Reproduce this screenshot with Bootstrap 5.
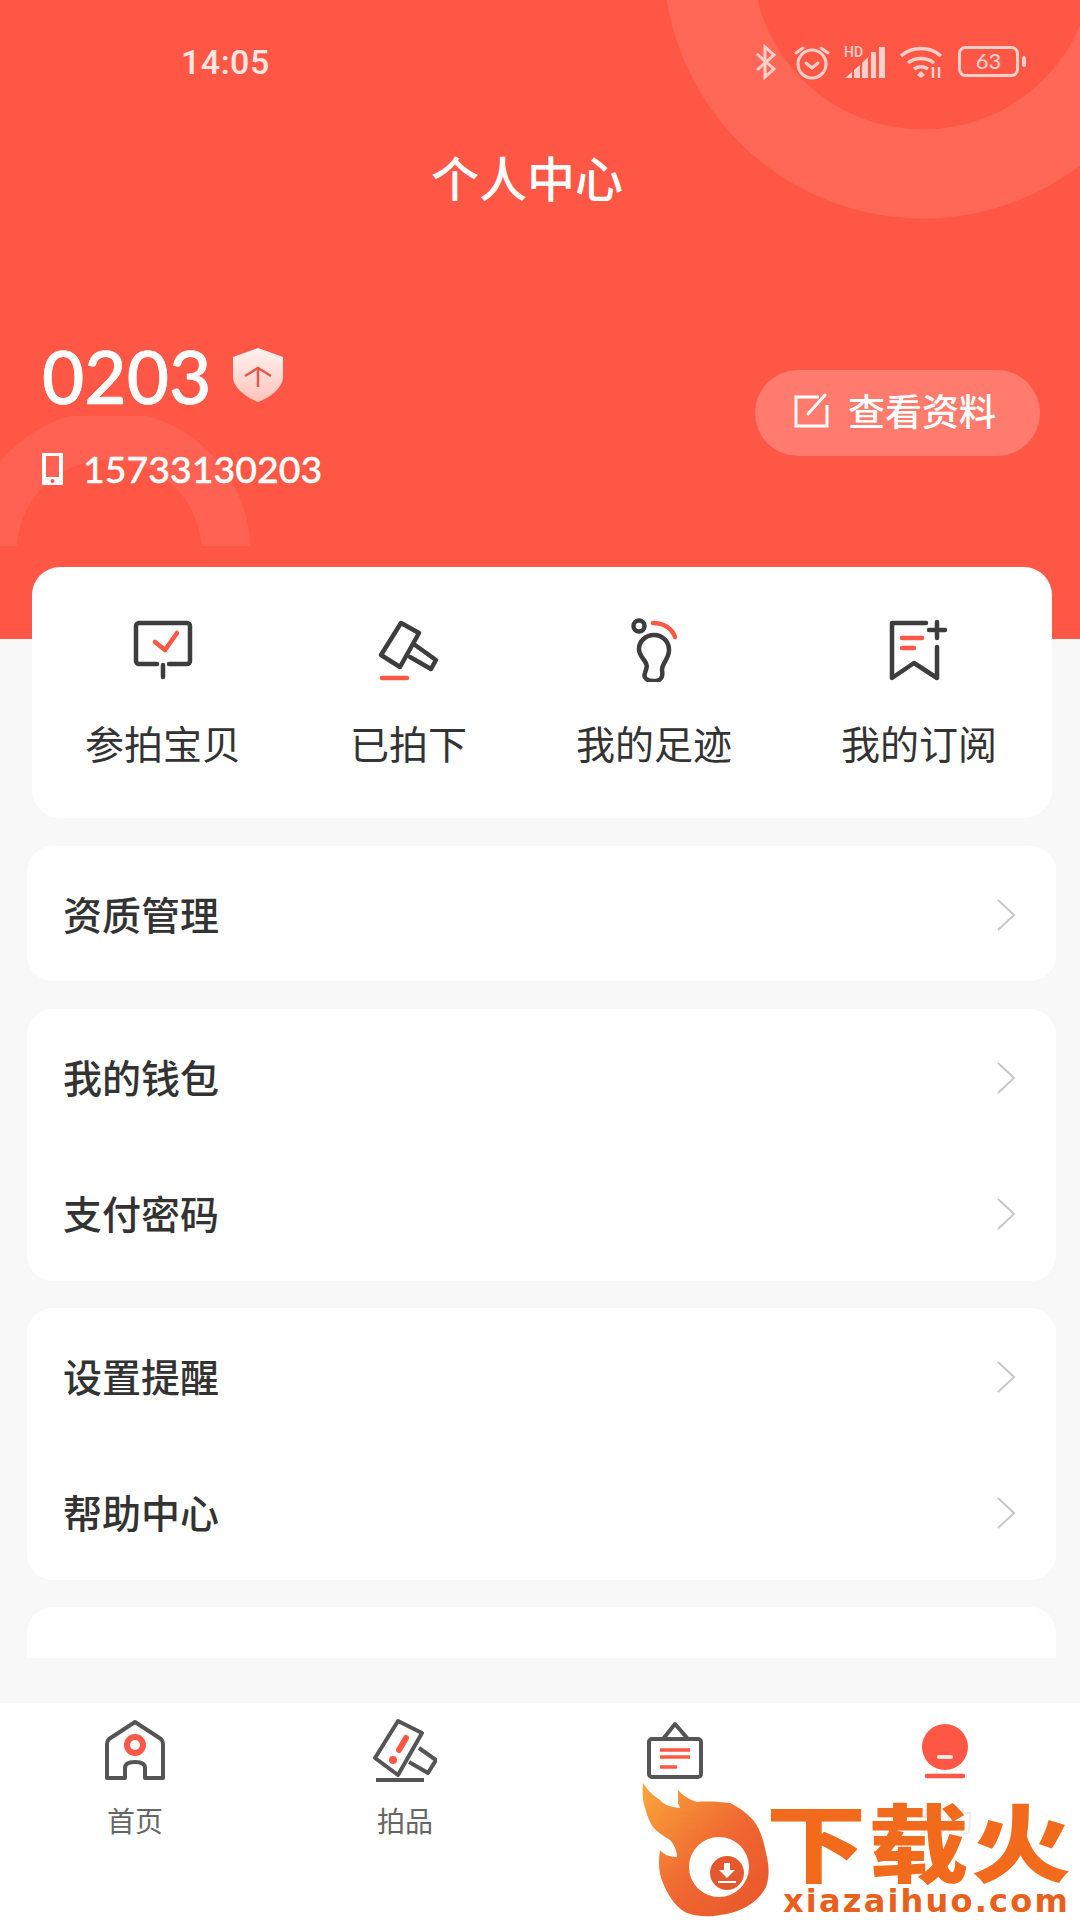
<!DOCTYPE html>
<html lang="zh-CN">
<head>
<meta charset="utf-8">
<title>个人中心</title>
<link href="https://cdn.jsdelivr.net/npm/bootstrap@5.3.0/dist/css/bootstrap.min.css" rel="stylesheet">
<style>
html,body{margin:0;width:1080px;height:1920px;overflow:hidden}
body{background:#f8f8f8;font-family:"Noto Sans CJK SC","Noto Sans",sans-serif;color:#333}
.app-page{position:relative;width:1080px;height:1920px;overflow:hidden}
.hero{position:relative;height:639px;background:#ff5745;color:#fff;overflow:hidden}
.hero-decor{position:absolute;left:0;top:0;width:1080px;height:639px}
.hero-body{position:relative}
.status-row{padding:41px 52px 0 181px;height:82px}
.status-time{font:500 34px/42px Roboto,sans-serif;color:#ffe6e3;letter-spacing:.5px}
.status-icons{gap:13px;margin-top:3px}
.status-icons svg:first-child{margin-right:2px;margin-left:-2px}
.page-title{margin:64px 0 0;font-size:48px;font-weight:500;line-height:60px;text-align:center;padding-right:26px}
.profile-row{margin-top:131px;padding:0 40px 0 42px}
.user-name{font:500 73px/80px Lato,sans-serif;margin:-1px 0 1px;-webkit-text-stroke:.7px #fff}
.name-row{gap:22px}
.name-row svg{margin-top:-5px}
.user-phone{font:500 37.500px/40px Lato,sans-serif;margin:32px 0 0;gap:20px;-webkit-text-stroke:.35px #fff}
.user-phone svg{flex:none}
.view-btn{width:285px;height:86px;border-radius:43px;background:#ff7b6e;color:#fff;border:0;font-size:37px;font-weight:500;line-height:1;gap:16px;padding:0}
.view-btn:hover,.view-btn:focus{background:#ff7b6e;color:#fff}
.view-btn span{margin-top:-6px}
.view-btn svg{margin-top:-6px;margin-left:-5px}
.content-area{height:1064px;padding:0 24px 0 27px}
.quick-card{margin:-72px 4px 28px 5px;height:251px;border:0;border-radius:28px;background:#fff;padding:0 55px 0 53px;position:relative}
.quick-item{font-size:39px;line-height:50px;color:#333;padding-top:51px;width:117px;white-space:nowrap;align-items:center}
.quick-item.wide{width:156px}
.quick-item svg{margin-bottom:35px}
.menu-group{border-radius:26px;margin-bottom:27px;background:#fff}
.menu-group.single{margin-bottom:28px}
.menu-group .list-group-item{height:136px;border:0;padding:0 40px 0 36px;font-size:39px;font-weight:500;color:#333;background:transparent;line-height:1}
.menu-group .list-group-item span{margin-top:-1px}
.menu-group .list-group-item svg{margin-top:2px}
.menu-group.single .list-group-item{height:135px}
.menu-group.clipped{height:51px;border-radius:26px 26px 0 0;margin-bottom:0}
.tab-bar{height:217px;background:#fff}
.tab-item{width:270px;font-size:28px;line-height:36px;color:#666;padding-top:15px}
.tab-item svg{margin-bottom:20px}
.brand-mark{position:absolute;left:640px;top:1783px;width:440px;height:134px;background:linear-gradient(rgba(255,255,255,0) 0,rgba(255,255,255,.88) 16px)}
.brand-flame{position:absolute;left:0;top:0;opacity:.93}
.brand-name{position:absolute;left:126px;top:14px;font:900 100px/100px "Noto Sans CJK SC",sans-serif;color:#f26a1b;letter-spacing:2.500px;white-space:nowrap;transform:scaleY(.85);transform-origin:0 0}
.brand-url{position:absolute;left:143px;top:101px;font:700 32px/34px "DejaVu Sans",sans-serif;color:#e8601c;letter-spacing:2.200px;white-space:nowrap}
</style>
</head>
<body>
<div class="app-page d-flex flex-column">
  <header class="hero">
    <svg class="hero-decor" viewBox="0 0 1080 639" fill="none" aria-hidden="true">
      <circle cx="923" cy="-41" r="215" stroke="#ff6757" stroke-width="89"/>
      <clipPath id="leftClip"><rect x="0" y="416" width="300" height="130"/></clipPath>
      <circle cx="109" cy="552" r="117" stroke="#ff6252" stroke-width="49" clip-path="url(#leftClip)"/>
    </svg>
    <div class="hero-body">
      <div class="status-row d-flex justify-content-between align-items-start">
        <span class="status-time">14:05</span>
        <div class="status-icons d-flex align-items-center">
          <svg width="24" height="36" viewBox="0 0 24 36" fill="none" stroke="#ffcfca" stroke-width="3"><path d="M3 10 20 25 11 33V3l9 8L3 26"/></svg>
          <svg width="38" height="36" viewBox="0 0 38 36" fill="none" stroke="#ffcfca" stroke-width="3"><circle cx="19" cy="20" r="14"/><path d="M13 19l6 5 6-5M3 9l7-5M35 9l-7-5" stroke-linecap="round"/></svg>
          <svg width="42" height="34" viewBox="0 0 42 34" fill="#ffcfca"><path d="M1 33l7-6v6zM10 25l6-5v13h-6zM18 18l6-6v21h-6zM27 7h5v26h-5zM35 2h6v31h-6z"/><text x="0" y="12" font-family="Roboto,sans-serif" font-size="14" font-weight="500">HD</text></svg>
          <svg width="46" height="34" viewBox="0 0 46 34" fill="none" stroke="#ffcfca" stroke-width="3.500"><path d="M2 11c11-10 29-10 40 0M9 18c7-6 19-6 26 0M15 24c4-3 10-3 14 0"/><path d="M18 30l4-4 4 4-4 3z" fill="#ffcfca" stroke="none"/><path d="M34 22v11M40 22v11" stroke-width="2.500"/></svg>
          <svg width="70" height="32" viewBox="0 0 70 32" fill="none"><rect x="1.500" y="1.500" width="58" height="28" rx="6" stroke="#ffcfca" stroke-width="3"/><rect x="64" y="10" width="4" height="11" rx="2" fill="#ffcfca"/><text x="30.500" y="23" text-anchor="middle" font-family="Lato,sans-serif" font-size="22" font-weight="500" fill="#ffcfca">63</text></svg>
        </div>
      </div>
      <h1 class="page-title">个人中心</h1>
      <div class="profile-row d-flex justify-content-between align-items-center">
        <div>
          <div class="name-row d-flex align-items-center">
            <p class="user-name">0203</p>
            <svg width="50" height="54" viewBox="0 0 50 54" fill="none"><defs><linearGradient id="shieldFill" x1="0" y1="0" x2="0" y2="1"><stop offset="0" stop-color="#fff3f1"/><stop offset="1" stop-color="#ffc2b9"/></linearGradient></defs><path d="M25 0 50 9V29C50 40 36 50 25 54 14 50 0 40 0 29V9Z" fill="url(#shieldFill)"/><path d="M12 28 25 20 38 28M25 20V39" stroke="#e4594b" stroke-width="2.500"/></svg>
          </div>
          <div class="user-phone d-flex align-items-center">
            <svg width="21" height="32" viewBox="0 0 21 32"><path d="M1 0H20a1 1 0 0 1 1 1V31a1 1 0 0 1-1 1H1a1 1 0 0 1-1-1V1a1 1 0 0 1 1-1ZM4 3V24H17V3Z" fill="#fff" fill-rule="evenodd"/><circle cx="10.500" cy="28" r="2" fill="#ff5745"/></svg>
            <span>15733130203</span>
          </div>
        </div>
        <button class="view-btn btn d-flex align-items-center justify-content-center" type="button">
          <svg width="38" height="36" viewBox="0 0 38 36" fill="none" stroke="#fff" stroke-width="3"><path d="M25 5H2V34H33V13"/><path d="M14 22 31 3" stroke-linecap="round"/></svg>
          <span>查看资料</span>
        </button>
      </div>
    </div>
  </header>

  <main class="content-area">
    <section class="quick-card card d-flex flex-row justify-content-between">
      <div class="quick-item wide d-flex flex-column">
        <svg width="64" height="64" viewBox="0 0 64 64" fill="none" stroke="#3d3d3d" stroke-width="4.500" stroke-linecap="round" stroke-linejoin="round"><path d="M26 46H8a3 3 0 0 1-3-3V8a3 3 0 0 1 3-3H56a3 3 0 0 1 3 3V43a3 3 0 0 1-3 3H38M32 47V59"/><path d="M24 24l10 8 12-17" stroke="#ff5745"/></svg>
        <span>参拍宝贝</span>
      </div>
      <div class="quick-item d-flex flex-column">
        <svg width="64" height="64" viewBox="0 0 64 64" fill="none" stroke="#3d3d3d" stroke-width="4.500" stroke-linecap="round" stroke-linejoin="round"><path d="M24 5 42 15 23 49 4 37Z"/><path d="M38 27 59 42 54 51 33 39"/><path d="M5 60H30" stroke="#ff5745"/></svg>
        <span>已拍下</span>
      </div>
      <div class="quick-item wide d-flex flex-column">
        <svg width="64" height="64" viewBox="0 0 64 64" fill="none" stroke="#3d3d3d" stroke-width="4.500" stroke-linecap="round"><circle cx="17" cy="8" r="5.500"/><path d="M32 17C41 17 47 24 47 32 47 41 40 45 40 52 41 58 40 63 32 63 25 63 21 60 23 55 25 49 26 47 22 42 18 37 17 34 17 31 17 23 24 17 32 17Z"/><path d="M31 5C41 5 50 10 53 19" stroke="#ff5745"/></svg>
        <span>我的足迹</span>
      </div>
      <div class="quick-item wide d-flex flex-column">
        <svg width="64" height="64" viewBox="0 0 64 64" fill="none" stroke="#3d3d3d" stroke-width="4.500" stroke-linecap="round" stroke-linejoin="round"><path d="M39 5H5V60L27 45 50 60V29M50 4V20M42 12H58"/><path d="M15 20H35M15 30H27" stroke="#ff5745"/></svg>
        <span>我的订阅</span>
      </div>
    </section>

    <ul class="menu-group single list-group">
      <li class="list-group-item d-flex justify-content-between align-items-center"><span>资质管理</span><svg width="20" height="34" viewBox="0 0 20 34" fill="none" stroke="#c8c8c8" stroke-width="2"><path d="M2 2 18 17 2 32"/></svg></li>
    </ul>
    <ul class="menu-group list-group">
      <li class="list-group-item d-flex justify-content-between align-items-center"><span>我的钱包</span><svg width="20" height="34" viewBox="0 0 20 34" fill="none" stroke="#c8c8c8" stroke-width="2"><path d="M2 2 18 17 2 32"/></svg></li>
      <li class="list-group-item d-flex justify-content-between align-items-center"><span>支付密码</span><svg width="20" height="34" viewBox="0 0 20 34" fill="none" stroke="#c8c8c8" stroke-width="2"><path d="M2 2 18 17 2 32"/></svg></li>
    </ul>
    <ul class="menu-group list-group">
      <li class="list-group-item d-flex justify-content-between align-items-center"><span>设置提醒</span><svg width="20" height="34" viewBox="0 0 20 34" fill="none" stroke="#c8c8c8" stroke-width="2"><path d="M2 2 18 17 2 32"/></svg></li>
      <li class="list-group-item d-flex justify-content-between align-items-center"><span>帮助中心</span><svg width="20" height="34" viewBox="0 0 20 34" fill="none" stroke="#c8c8c8" stroke-width="2"><path d="M2 2 18 17 2 32"/></svg></li>
    </ul>
    <div class="menu-group clipped"></div>
  </main>

  <nav class="tab-bar">
    <div class="d-flex">
      <div class="tab-item d-flex flex-column align-items-center">
        <svg width="64" height="64" viewBox="0 0 64 64" fill="none" stroke="#555" stroke-width="4" stroke-linejoin="round"><path d="M32 4 58 21Q60 23 60 26V60H42V50Q42 44 32 44 22 44 22 50V60H4V26Q4 23 6 21Z"/><circle cx="32" cy="27" r="8" stroke="#ff5745" stroke-width="6"/></svg>
        <span>首页</span>
      </div>
      <div class="tab-item d-flex flex-column align-items-center">
        <svg width="64" height="64" viewBox="0 0 64 64" fill="none" stroke="#555" stroke-width="4" stroke-linejoin="round"><path d="M25 3 49 15 25 57 2 40Z"/><path d="M46 30 63 42 55 55 36 44M3 62H51"/><path d="M33 20 26 32" stroke="#ff5745" stroke-width="6" stroke-linecap="round"/><circle cx="20" cy="42" r="4" fill="#ff5745" stroke="none"/></svg>
        <span>拍品</span>
      </div>
      <div class="tab-item d-flex flex-column align-items-center">
        <svg width="64" height="64" viewBox="0 0 64 64" fill="none" stroke="#555" stroke-width="4" stroke-linejoin="round"><path d="M20 21 32 6 45 21"/><rect x="6" y="21" width="52" height="38" rx="3"/><path d="M17 32H47M17 39H47M17 49H34" stroke="#ff5745" stroke-width="3.500"/></svg>
        <span>公告</span>
      </div>
      <div class="tab-item d-flex flex-column align-items-center">
        <svg width="64" height="64" viewBox="0 0 64 64" fill="none"><circle cx="32" cy="29" r="23" fill="#ff5745"/><path d="M26 39H38" stroke="#fff" stroke-width="4" stroke-linecap="round" opacity=".85"/><path d="M14 58H50" stroke="#ff5745" stroke-width="4.500" stroke-linecap="round"/></svg>
        <span>我的</span>
      </div>
    </div>
  </nav>

  <div class="brand-mark">
    <svg class="brand-flame" width="130" height="134" viewBox="0 0 130 134"><defs><linearGradient id="flameFill" x1="0" y1="0" x2="1" y2="1"><stop offset="0" stop-color="#fba12c"/><stop offset=".55" stop-color="#ee5c22"/><stop offset="1" stop-color="#e8481c"/></linearGradient></defs><path d="M3 0C2 8 3 12 3 17 6 30 9 38 13 44 18 50 24 53 30 57 34 61 37 68 37 74 30 74 24 72 20 67 18 80 19 92 23 100 29 115 38 126 47 130 58 134 70 134 80 132 100 130 118 120 126 104 130 92 129 82 126 70 123 55 120 46 113 37 106 29 98 24 90 20 80 19 68 18 57 19 50 17 42 12 38 7L38 20 40 25C30 24 24 22 20 17 12 12 7 6 3 0Z" fill="url(#flameFill)"/><circle cx="79" cy="84" r="30" fill="#fff"/><circle cx="87" cy="90" r="17" fill="#e34c1e"/><path d="M84 80H90V87H95L87 95 79 87H84Z" fill="#fff"/><path d="M78 99H96" stroke="#fff" stroke-width="2"/></svg>
    <span class="brand-name">下载火</span>
    <span class="brand-url">xiazaihuo.com</span>
  </div>
</div>
<script src="https://cdn.jsdelivr.net/npm/bootstrap@5.3.0/dist/js/bootstrap.bundle.min.js"></script>
</body>
</html>
